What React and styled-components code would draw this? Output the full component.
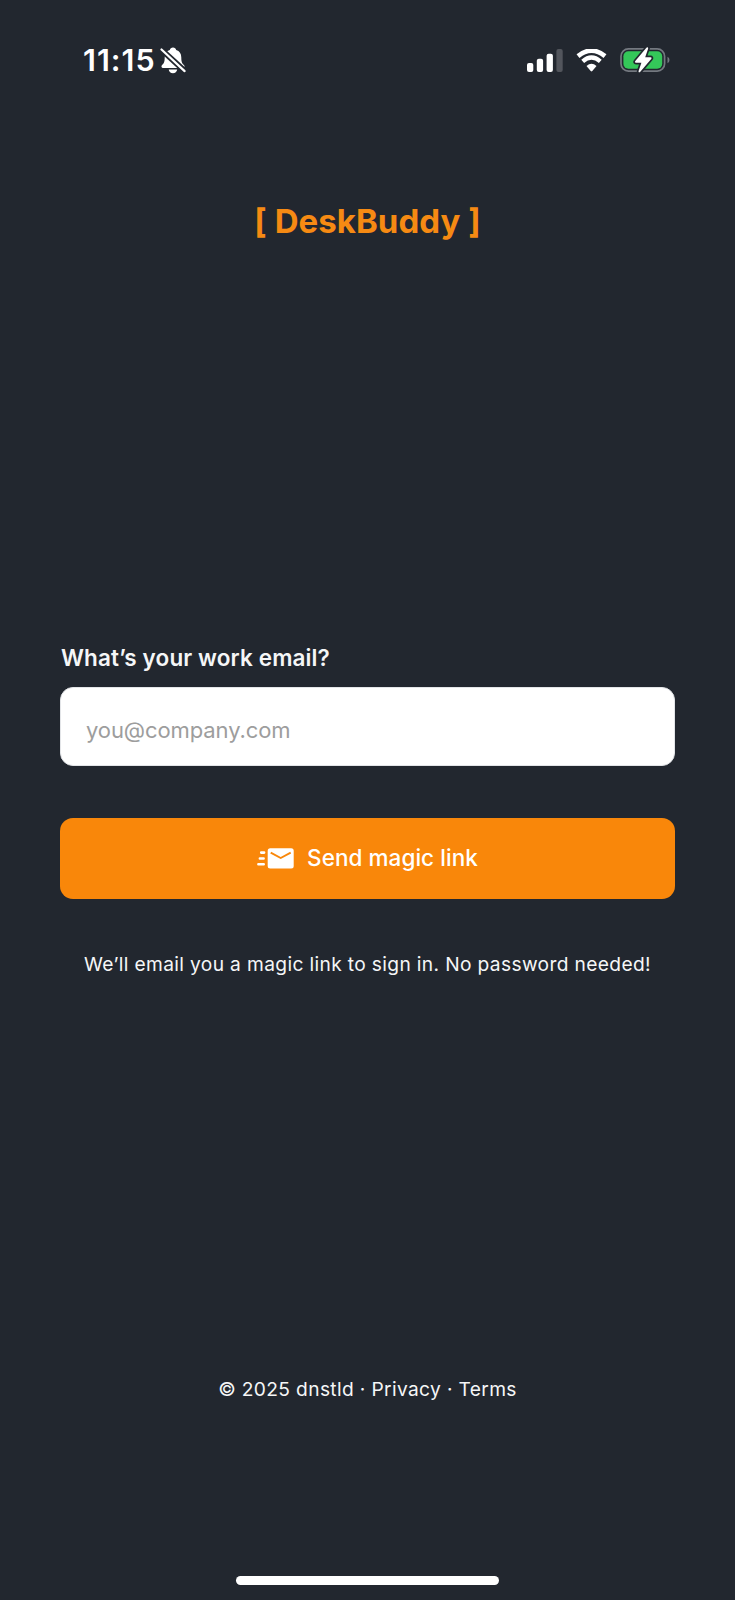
import React from "react";
import styled, { createGlobalStyle } from "styled-components";

const GlobalStyle = createGlobalStyle`
  *, *::before, *::after { box-sizing: border-box; }
  body {
    margin: 0;
    background: #22272f;
    font-family: Inter, "Liberation Sans", sans-serif;
    color: #f5f6f7;
  }
`;

const Screen = styled.main`
  display: flex;
  flex-direction: column;
  align-items: center;
  width: 735px;
  height: 1600px;
  background: #22272f;
  overflow: hidden;
`;

const StatusBar = styled.header`
  display: flex;
  align-items: center;
  justify-content: space-between;
  width: 100%;
  height: 120px;
  padding: 0 64px 0 83px;
`;

const StatusGroup = styled.div`
  display: flex;
  align-items: center;
  gap: ${({ $gap }) => $gap}px;
`;

const Time = styled.span`
  font-size: 30.5px;
  font-weight: 600;
  line-height: 36px;
  letter-spacing: 1px;
  color: #fff;
`;

const Icon = styled.svg`
  display: block;
  flex: none;
`;

const Brand = styled.h1`
  margin: 79px 0 0;
  font-size: 33px;
  font-weight: 700;
  line-height: 45px;
  letter-spacing: 0.04px;
  color: #f68a13;
  white-space: nowrap;
`;

const Form = styled.form`
  display: flex;
  flex-direction: column;
  width: 615px;
  margin-top: 399px;
`;

const Label = styled.label`
  height: 44px;
  padding-left: 1px;
  font-size: 22.5px;
  font-weight: 600;
  line-height: 30px;
  letter-spacing: 0.12px;
`;

const EmailInput = styled.input`
  width: 100%;
  height: 79px;
  padding: 7px 25px 0;
  border: 1px solid #e3e5e8;
  border-radius: 13px;
  background: #fff;
  font: 400 22px Inter, "Liberation Sans", sans-serif;
  letter-spacing: -0.1px;
  outline: none;

  &::placeholder {
    color: #9d9d9d;
    opacity: 1;
  }
`;

const SubmitButton = styled.button`
  display: flex;
  align-items: center;
  justify-content: center;
  gap: 13px;
  width: 100%;
  height: 81px;
  margin-top: 52px;
  padding: 0 0 1px;
  border: 0;
  border-radius: 13px;
  background: #f9870a;
  color: #fff;
  font: 500 22.5px Inter, "Liberation Sans", sans-serif;
  letter-spacing: 0.05px;
`;

const ButtonText = styled.span`
  padding-bottom: 2px;
`;

const Hint = styled.p`
  margin: 50px 0 0;
  font-size: 19.2px;
  line-height: 30px;
  letter-spacing: 0.35px;
  white-space: nowrap;
`;

const Footer = styled.footer`
  display: flex;
  margin-top: auto;
  font-size: 19.2px;
  line-height: 30px;
  letter-spacing: 0.35px;
  white-space: pre;
`;

const FooterLink = styled.a`
  color: inherit;
`;

const HomeIndicator = styled.div`
  width: 263px;
  height: 9px;
  margin: 172px 0 15px;
  border-radius: 5px;
  background: #fff;
`;

const BellOff = () => (
  <Icon width="26" height="27" viewBox="0 0 26 27" fill="#fff">
    <path d="M13 0.600c1.700 0 2.900 1.100 3.200 2.500 3.400 1 5.100 3.900 5.100 7.300 0 4.700.9 5.800 2.800 7.800.9 1 .4 2.800-1.100 2.800H3c-1.500 0-2-1.800-1.100-2.800 1.900-2 2.800-3.100 2.800-7.800 0-3.400 1.700-6.300 5.100-7.300.3-1.400 1.500-2.500 3.200-2.500z" />
    <path d="M8.700 22.600h8.500c-.3 2.200-2 3.700-4.250 3.700s-3.950-1.500-4.250-3.700z" />
    <path d="M1.600 2.800l23.200 21.400" stroke="#22272f" strokeWidth="5.800" />
    <path d="M1.500 2.500l23.100 21.600" stroke="#fff" strokeWidth="2.200" strokeLinecap="round" />
  </Icon>
);

const Signal = () => (
  <Icon width="36" height="23" viewBox="0 0 36 23" fill="#fff">
    <rect x="0" y="14" width="6.300" height="9" rx="2" />
    <rect x="9.800" y="9.800" width="6.300" height="13.200" rx="2" />
    <rect x="19.600" y="4.800" width="6.300" height="18.200" rx="2" />
    <rect x="29.400" y="0" width="6.300" height="23" rx="2" fill="#52555c" />
  </Icon>
);

const Wifi = () => (
  <Icon width="31" height="23" viewBox="0 0 31 23">
    <path d="M2 7.100Q15.500-3.900 29 7.100" fill="none" stroke="#fff" strokeWidth="4.600" />
    <path d="M6.700 12.300Q15.500 4.700 24.300 12.300" fill="none" stroke="#fff" strokeWidth="4.300" />
    <path d="M10.500 17.100Q15.500 12.500 20.500 17.100L16.300 22Q15.500 22.900 14.700 22Z" fill="#fff" />
  </Icon>
);

const Battery = () => (
  <Icon width="51" height="26" viewBox="0 0 51 26">
    <rect x="1" y="1.900" width="43.600" height="22.200" rx="7.400" fill="none" stroke="#747980" strokeWidth="1.700" />
    <path d="M47.500 9.800q2 1 2 3.200t-2 3.200z" fill="#747980" />
    <rect x="3.400" y="4.300" width="38.800" height="17.400" rx="5" fill="#34c759" />
    <path d="M26.400.8L15.300 14.100c-.7.8-.3 1.600.7 1.600h5.400l-2.800 8.200c-.4 1.400.9 1.900 1.700.9L31.200 11.900c.7-.8.300-1.600-.7-1.600h-5.300l2.900-8.600c.4-1.400-.8-1.900-1.700-.9z" fill="#fff" stroke="#22272f" strokeWidth="3.400" strokeLinejoin="round" paintOrder="stroke" />
  </Icon>
);

const SendMail = () => (
  <Icon width="37" height="21" viewBox="0 0 37 21">
    <rect x="10.700" y="0.200" width="26" height="20.400" rx="2.500" fill="#fff" />
    <path d="M13.700 4.600l10 5.400 10-5.400" fill="none" stroke="#f9870a" strokeWidth="1.900" />
    <path d="M4.200 4.600h2.900M2.900 10.500h3.700M1.400 16.300h5.300" fill="none" stroke="#fff" strokeWidth="2.600" strokeLinecap="round" />
  </Icon>
);

export default function App() {
  return (
    <>
      <GlobalStyle />
      <Screen>
        <StatusBar>
          <StatusGroup $gap={4}>
            <Time>11:15</Time>
            <BellOff />
          </StatusGroup>
          <StatusGroup $gap={13}>
            <Signal />
            <Wifi />
            <Battery />
          </StatusGroup>
        </StatusBar>
        <Brand>[ DeskBuddy ]</Brand>
        <Form onSubmit={(event) => event.preventDefault()}>
          <Label htmlFor="email">What’s your work email?</Label>
          <EmailInput id="email" type="email" placeholder="you@company.com" />
          <SubmitButton type="submit">
            <SendMail />
            <ButtonText>Send magic link</ButtonText>
          </SubmitButton>
        </Form>
        <Hint>We’ll email you a magic link to sign in. No password needed!</Hint>
        <Footer>
          <span>© 2025 dnstld · </span>
          <FooterLink>Privacy</FooterLink>
          <span> · </span>
          <FooterLink>Terms</FooterLink>
        </Footer>
        <HomeIndicator />
      </Screen>
    </>
  );
}
